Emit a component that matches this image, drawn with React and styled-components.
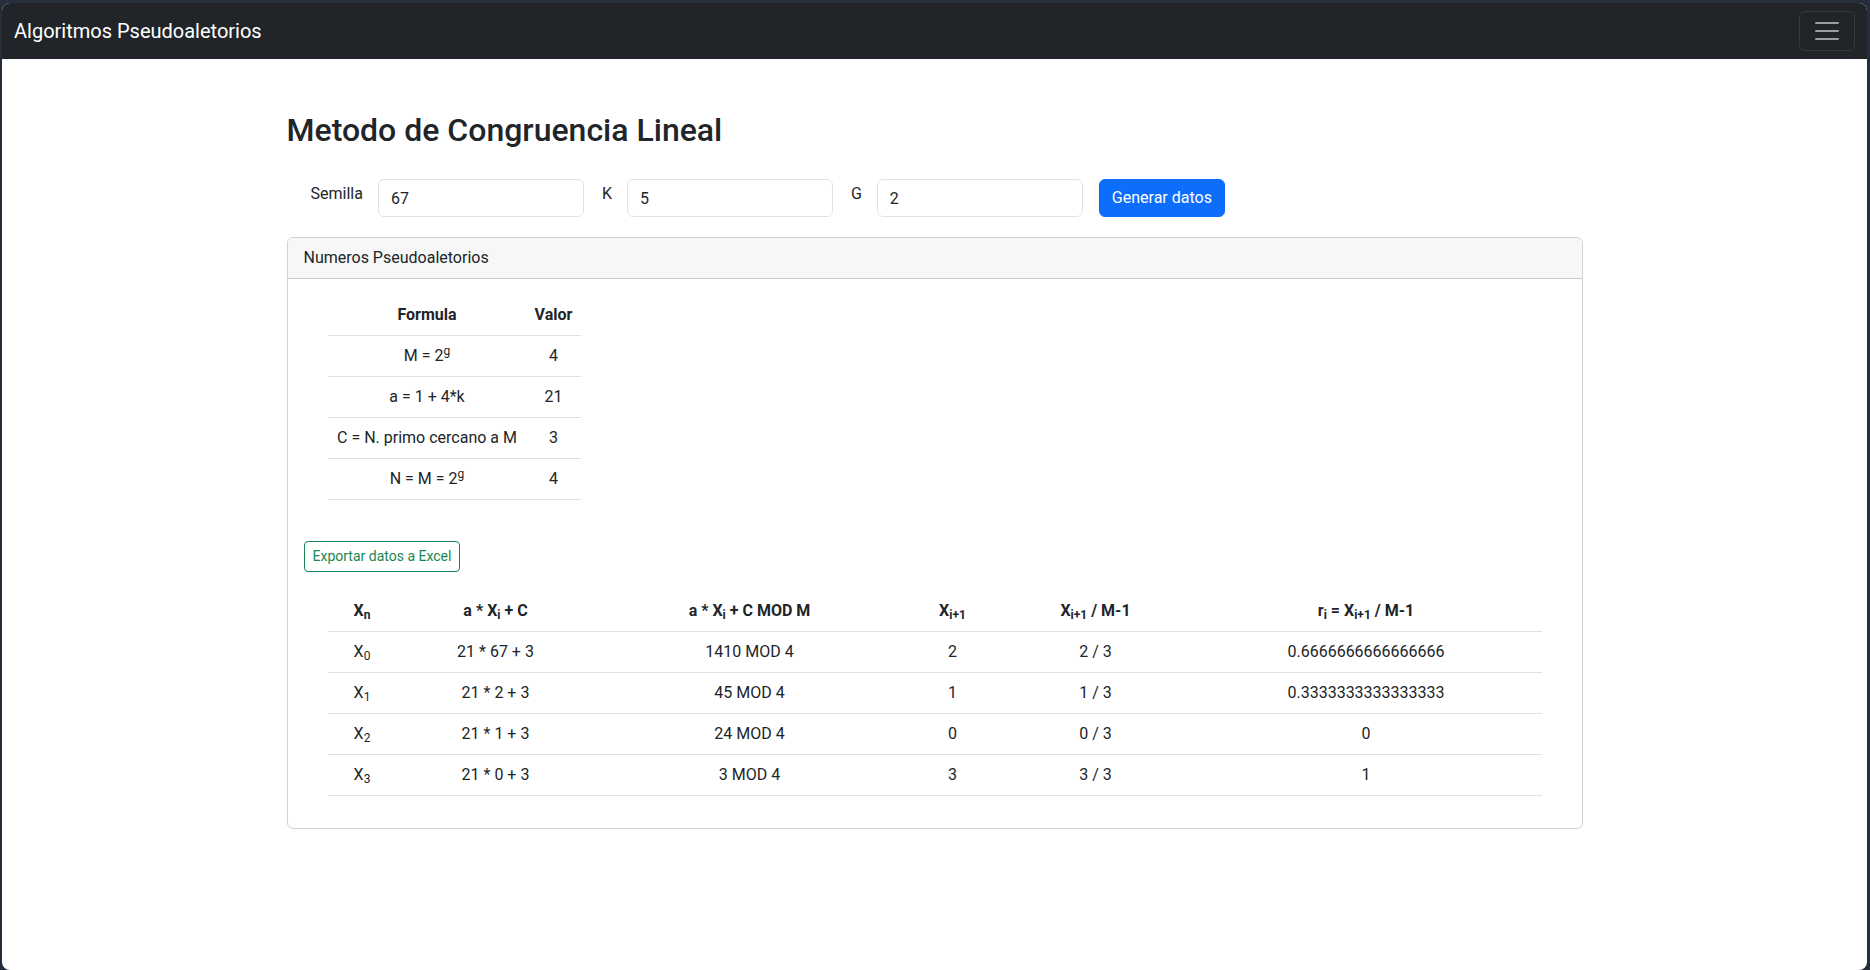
import React from 'react'
import styled, { createGlobalStyle } from 'styled-components'

const GlobalStyle = createGlobalStyle`
  html, body {
    margin: 0;
    padding: 0;
    background: #272e3b;
  }

  body {
    font-family: Roboto, "Liberation Sans", sans-serif;
    font-size: 16px;
    line-height: 1.5;
    color: #212529;
  }

  * {
    box-sizing: border-box;
  }
`

const Frame = styled.div`
  height: 970px;
  padding: 3px 3px 0 2px;
`

const Screen = styled.div`
  height: 100%;
  background: #fff;
  border-radius: 8px;
  overflow: hidden;
`

const NavBar = styled.nav`
  display: flex;
  align-items: center;
  justify-content: space-between;
  height: 56px;
  padding: 0 12px;
  background: #212529;
`

const Brand = styled.a`
  color: #fff;
  font-size: 20px;
  line-height: 30px;
  text-decoration: none;
`

const Toggler = styled.button`
  display: flex;
  align-items: center;
  justify-content: center;
  width: 56px;
  height: 40px;
  padding: 4px 12px;
  background: transparent;
  border: 1px solid rgba(255, 255, 255, 0.1);
  border-radius: 6px;
`

const Container = styled.main`
  max-width: 1320px;
  margin: 0 auto;
  padding: 52px 12px 0;
`

const Title = styled.h2`
  margin: 0;
  font-size: 32px;
  font-weight: 500;
  line-height: 1.2;
`

const FormRow = styled.form`
  display: flex;
  align-items: flex-start;
  gap: 18px;
  margin-top: 30px;
  padding-left: 24px;
`

const Field = styled.div`
  display: flex;
  align-items: flex-start;
  gap: 15px;
`

const Label = styled.label`
  padding-top: 3px;
  line-height: 24px;
`

const Input = styled.input`
  width: 206px;
  height: 38px;
  padding: 6px 12px;
  font: inherit;
  line-height: 24px;
  color: #212529;
  background: #fff;
  border: 1px solid #dee2e6;
  border-radius: 6px;
  outline: none;
`

const PrimaryButton = styled.button`
  margin-left: -2px;
  height: 38px;
  padding: 6px 12px;
  font: inherit;
  line-height: 24px;
  color: #fff;
  background: #0d6efd;
  border: 1px solid #0d6efd;
  border-radius: 6px;
`

const Card = styled.section`
  margin-top: 20px;
  border: 1px solid rgba(0, 0, 0, 0.175);
  border-radius: 6px;
  overflow: hidden;
`

const CardHeader = styled.div`
  padding: 8px 16px;
  line-height: 24px;
  background: #f7f7f7;
  border-bottom: 1px solid rgba(0, 0, 0, 0.175);
`

const CardBody = styled.div`
  padding: 16px;
`

const TableWrap = styled.div`
  padding: 0 24px;
  margin-top: ${(p) => p.$top || 0}px;
  margin-bottom: 16px;
`

const Table = styled.table`
  width: ${(p) => (p.$full ? '100%' : 'auto')};
  table-layout: fixed;
  border-collapse: collapse;
  text-align: center;
`

const Th = styled.th`
  width: ${(p) => p.$w}px;
  padding: 8px;
  font-weight: 700;
  line-height: 24px;
  border-bottom: 1px solid #dee2e6;
`

const Td = styled.td`
  padding: 8px;
  line-height: 24px;
  border-bottom: 1px solid #dee2e6;
`

const Sub = styled.sub`
  font-size: 0.75em;
  line-height: 0;
  vertical-align: -0.25em;
`

const Sup = styled.sup`
  font-size: 0.75em;
  line-height: 0;
  vertical-align: 0.5em;
`

const ButtonRow = styled.div`
  display: flex;
  margin-top: 41px;
`

const OutlineButton = styled.button`
  height: 31px;
  padding: 4px 8px;
  font: inherit;
  font-size: 14px;
  line-height: 21px;
  color: #198754;
  background: #fff;
  border: 1px solid #198754;
  border-radius: 4px;
`

const MenuIcon = () => (
  <svg width="30" height="30" viewBox="0 0 30 30">
    <path
      d="M4 7h22M4 15h22M4 23h22"
      stroke="rgba(255,255,255,0.55)"
      strokeWidth="2"
      strokeLinecap="round"
      strokeMiterlimit="10"
    />
  </svg>
)

const formulas = [
  [<>M = 2<Sup>g</Sup></>, '4'],
  ['a = 1 + 4*k', '21'],
  ['C = N. primo cercano a M', '3'],
  [<>N = M = 2<Sup>g</Sup></>, '4'],
]

const rows = [
  ['21 * 67 + 3', '1410 MOD 4', '2', '2 / 3', '0.6666666666666666'],
  ['21 * 2 + 3', '45 MOD 4', '1', '1 / 3', '0.3333333333333333'],
  ['21 * 1 + 3', '24 MOD 4', '0', '0 / 3', '0'],
  ['21 * 0 + 3', '3 MOD 4', '3', '3 / 3', '1'],
]

const Xi = () => <>X<Sub>i</Sub></>
const Xi1 = () => <>X<Sub>i+1</Sub></>

export default function App() {
  return (
    <>
      <GlobalStyle />
      <Frame>
        <Screen>
          <NavBar>
            <Brand href="#">Algoritmos Pseudoaletorios</Brand>
            <Toggler type="button" aria-label="Menu">
              <MenuIcon />
            </Toggler>
          </NavBar>

          <Container>
            <Title>Metodo de Congruencia Lineal</Title>

            <FormRow onSubmit={(e) => e.preventDefault()}>
              <Field>
                <Label>Semilla</Label>
                <Input defaultValue="67" />
              </Field>
              <Field>
                <Label>K</Label>
                <Input defaultValue="5" />
              </Field>
              <Field>
                <Label>G</Label>
                <Input defaultValue="2" />
              </Field>
              <PrimaryButton type="submit">Generar datos</PrimaryButton>
            </FormRow>

            <Card>
              <CardHeader>Numeros Pseudoaletorios</CardHeader>
              <CardBody>
                <TableWrap>
                  <Table>
                    <thead>
                      <tr>
                        <Th $w={199}>Formula</Th>
                        <Th $w={54}>Valor</Th>
                      </tr>
                    </thead>
                    <tbody>
                      {formulas.map(([f, v], i) => (
                        <tr key={i}>
                          <Td>{f}</Td>
                          <Td>{v}</Td>
                        </tr>
                      ))}
                    </tbody>
                  </Table>
                </TableWrap>

                <ButtonRow>
                  <OutlineButton type="button">Exportar datos a Excel</OutlineButton>
                </ButtonRow>

                <TableWrap $top={19}>
                  <Table $full>
                    <thead>
                      <tr>
                        <Th $w={69}>X<Sub>n</Sub></Th>
                        <Th $w={198}>a * <Xi /> + C</Th>
                        <Th $w={310}>a * <Xi /> + C MOD M</Th>
                        <Th $w={96}><Xi1 /></Th>
                        <Th $w={190}><Xi1 /> / M-1</Th>
                        <Th $w={351}>r<Sub>i</Sub> = <Xi1 /> / M-1</Th>
                      </tr>
                    </thead>
                    <tbody>
                      {rows.map((r, i) => (
                        <tr key={i}>
                          <Td>X<Sub>{i}</Sub></Td>
                          {r.map((c, j) => (
                            <Td key={j}>{c}</Td>
                          ))}
                        </tr>
                      ))}
                    </tbody>
                  </Table>
                </TableWrap>
              </CardBody>
            </Card>
          </Container>
        </Screen>
      </Frame>
    </>
  )
}
